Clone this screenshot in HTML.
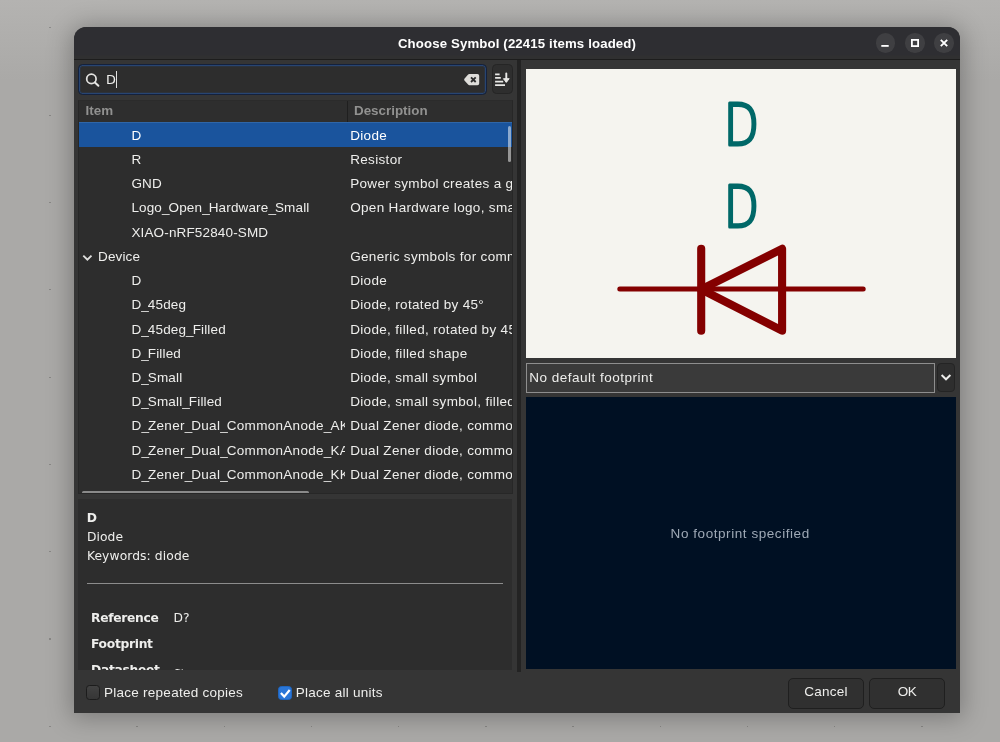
<!DOCTYPE html>
<html lang="en">
<head>
<meta charset="utf-8">
<title>Choose Symbol</title>
<style>
*{box-sizing:border-box;margin:0;padding:0}
html,body{width:1000px;height:742px;overflow:hidden}
body{position:relative;background:#aaa9a7 linear-gradient(#b4b3b1,#aaa9a7 80px) no-repeat;font-family:"Liberation Sans",sans-serif;font-size:14px;color:#eeeeec}
.abs{position:absolute}
.dot{width:1.6px;height:1.2px;background:rgba(0,0,0,.2)}
#shadow{left:74px;top:27px;width:886px;height:686px;border-radius:12px 12px 0 0;box-shadow:0 2px 24px 3px rgba(0,0,0,.27)}
#win{left:74px;top:27px;width:886px;height:686px;border-radius:12px 12px 0 0;background:#353535;overflow:hidden;will-change:transform}
#tb{left:0;top:0;width:886px;height:33px;background:linear-gradient(#2e2e32 28px,#303031 29px);border-bottom:1px solid #1d1d1d}
#title{left:0;top:0;width:886px;height:32px;line-height:32px;text-align:center;font-weight:bold;font-size:13.2px;letter-spacing:.15px;color:#fff;padding-top:.5px}
.wb{width:19.6px;height:19.6px;border-radius:50%;background:#3f3f42;top:6.2px}
.t{white-space:nowrap;line-height:24px;height:24px}
.row .t{top:1.3px;font-size:13.5px}
.c1{letter-spacing:.15px}
.u{letter-spacing:-1px}
.c1.w{letter-spacing:.3px}
.c2{letter-spacing:.33px}

#search{left:4px;top:37px;width:409px;height:30.5px;border:1px solid #14213c;border-radius:4.5px;background:#2d2d2d;box-shadow:inset 0 0 0 1px #284572,inset 0 0 0 2px rgba(40,69,114,.2)}
#sortbtn{left:418px;top:37px;width:20.6px;height:30.4px;border:1px solid #252525;border-radius:4.5px;background:#2e2e2e}
#list{left:4px;top:73px;width:434.8px;height:394px;background:#2d2d2d;border:1px solid #272727;border-top-color:#2b2b2b;overflow:hidden}
#lhead{left:0;top:0;width:434px;height:22px;background:#2e2e2e;border-bottom:1px solid #272727}
.hd{font-weight:bold;color:#919190;font-size:13.4px}
#rows{left:0;top:0;width:434px;height:394px}
.row{left:0;width:434px;height:24.23px}
.row.sel{background:#1a549d;color:#fff;box-shadow:inset 0 1px 0 #2f66a8}
.cell1{left:0;top:0;width:266px;height:24.2px;overflow:hidden}
.cell2{left:269px;top:0;width:164.6px;height:24.2px;overflow:hidden}
#details{left:4px;top:472px;width:434.3px;height:171px;background:#2d2d2d;overflow:hidden}
.d{letter-spacing:.1px;font-family:'DejaVu Sans',sans-serif;font-size:12.3px}
.b{font-weight:bold}
.d.b{letter-spacing:-.3px}
#sash{left:443.2px;top:33px;width:3.8px;height:612px;background:#232323}
#preview{left:452px;top:42px;width:430.3px;height:288.5px;background:#f5f4ef;overflow:hidden}
#combo{left:452px;top:335.5px;width:409.2px;height:30px;background:#3a3a3a;border:1px solid #8e8e8e}
#ddbtn{left:862.6px;top:336px;width:18.8px;height:29.4px;background:#2e2e2e;border:1px solid #242424;border-radius:4px}
#fp{left:452px;top:370.3px;width:430.3px;height:271.7px;background:#001023}
.cb{width:14px;height:14.6px;border-radius:3.5px;background:linear-gradient(#424242,#363636);border:1px solid #1c1c1c}
.cb.on{width:14px;background:#2a76d8;border-color:#1f66c0}
.btn{top:651px;height:30.5px;border:1px solid #1f1f1f;border-radius:5px;background:#303030;text-align:center;line-height:25.6px;white-space:nowrap}
</style>
</head>
<body>
<div id="dots"><i class="abs dot" style="left:49.1px;top:725.7px"></i><i class="abs dot" style="left:49.1px;top:638.4px"></i><i class="abs dot" style="left:49.1px;top:551.1px"></i><i class="abs dot" style="left:49.1px;top:463.8px"></i><i class="abs dot" style="left:49.1px;top:376.5px"></i><i class="abs dot" style="left:49.1px;top:289.2px"></i><i class="abs dot" style="left:49.1px;top:201.9px"></i><i class="abs dot" style="left:49.1px;top:114.6px"></i><i class="abs dot" style="left:49.1px;top:27.3px"></i><i class="abs dot" style="left:136.3px;top:725.7px"></i><i class="abs dot" style="left:223.5px;top:725.7px"></i><i class="abs dot" style="left:310.7px;top:725.7px"></i><i class="abs dot" style="left:397.9px;top:725.7px"></i><i class="abs dot" style="left:485.1px;top:725.7px"></i><i class="abs dot" style="left:572.3px;top:725.7px"></i><i class="abs dot" style="left:659.5px;top:725.7px"></i><i class="abs dot" style="left:746.7px;top:725.7px"></i><i class="abs dot" style="left:833.9px;top:725.7px"></i><i class="abs dot" style="left:921.1px;top:725.7px"></i></div>
<div id="shadow" class="abs"></div>
<div id="win" class="abs">
  <div id="tb" class="abs"></div>
  <div id="title" class="abs"><span id="titletxt">Choose Symbol (22415 items loaded)</span></div>
  <div class="abs wb" style="left:801.6px"><svg class="abs" style="left:-.2px;top:-.2px" width="20" height="20" viewBox="0 0 20 20"><rect x="6.3" y="12" width="7.4" height="1.8" fill="#fff"/></svg></div>
  <div class="abs wb" style="left:831.3px"><svg class="abs" style="left:-.2px;top:-.2px" width="20" height="20" viewBox="0 0 20 20"><rect x="6.9" y="6.9" width="6.2" height="6.2" fill="none" stroke="#fff" stroke-width="1.8"/></svg></div>
  <div class="abs wb" style="left:860.4px"><svg class="abs" style="left:-.2px;top:-.2px" width="20" height="20" viewBox="0 0 20 20"><path d="M6.8 6.8L13.2 13.2M13.2 6.8L6.8 13.2" stroke="#fff" stroke-width="1.9" fill="none"/></svg></div>

  <!-- search -->
  <div id="search" class="abs">
    <svg class="abs" style="left:5px;top:5.5px" width="18" height="18" viewBox="0 0 18 18"><circle cx="7.4" cy="7.9" r="4.7" fill="none" stroke="#e2e2e0" stroke-width="1.75"/><path d="M10.9 11.5L14.4 14.8" stroke="#e6e6e4" stroke-width="2" stroke-linecap="round"/></svg>
    <span class="abs t" id="stext" style="left:27px;top:2.5px;font-family:'DejaVu Sans',sans-serif;font-size:12.9px">D</span>
    <div class="abs" style="left:36.5px;top:6.3px;width:1.2px;height:16.4px;background:#e0e0e0"></div>
    <svg class="abs" style="left:384px;top:8px" width="18" height="13" viewBox="0 0 18 13"><path d="M6.4 1H14.4Q16.2 1 16.2 2.8V10.4Q16.2 12.2 14.4 12.2H6.4Q5.6 12.2 5.1 11.6L1.4 7.4Q0.9 6.6 1.4 5.8L5.1 1.6Q5.6 1 6.4 1Z" fill="#deddda"/><path d="M8 4.3L12.7 9M12.7 4.3L8 9" stroke="#2d2d2d" stroke-width="1.8"/></svg>
  </div>
  <div id="sortbtn" class="abs">
    <svg class="abs" style="left:-1.5px;top:-1px" width="21" height="31" viewBox="0 0 21 31"><path d="M3.1 10.4H7.6M3.1 13.9H8.8M3.1 17.6H11.2M3.1 21.2H13" stroke="#e8e8e6" stroke-width="1.8"/><path d="M14.3 9.4V17.4" stroke="#e8e8e6" stroke-width="1.9" fill="none" stroke-linecap="round"/><path d="M11.4 14.7L14.3 18.3L17.2 14.7Z" fill="#e8e8e6" stroke="#e8e8e6" stroke-width="1" stroke-linejoin="round"/></svg>
  </div>
  <!-- tree list -->
  <div id="list" class="abs">
    <div id="lhead" class="abs">
      <span class="abs t hd" id="h1" style="left:6.5px;top:-2px">Item</span>
      <div class="abs" style="left:268px;top:0;width:1px;height:22px;background:#1f1f1f"></div>
      <span class="abs t hd" id="h2" style="left:275px;top:-2px">Description</span>
    </div>
    <div id="rows" class="abs">
      <div class="abs row sel" style="top:21.40px"><div class="abs cell1"><span class="abs t c1" style="left:52.4px">D</span></div><div class="abs cell2"><span class="abs t c2" style="left:2.2px">Diode</span></div></div>
      <div class="abs row" style="top:45.63px"><div class="abs cell1"><span class="abs t c1" style="left:52.4px">R</span></div><div class="abs cell2"><span class="abs t c2" style="left:2.2px">Resistor</span></div></div>
      <div class="abs row" style="top:69.86px"><div class="abs cell1"><span class="abs t c1" style="left:52.4px">GND</span></div><div class="abs cell2"><span class="abs t c2" style="left:2.2px">Power symbol creates a global label with name &quot;GND&quot; , ground</span></div></div>
      <div class="abs row" style="top:94.09px"><div class="abs cell1"><span class="abs t c1" style="left:52.4px">Logo<span class="u">_</span>Open<span class="u">_</span>Hardware<span class="u">_</span>Small</span></div><div class="abs cell2"><span class="abs t c2" style="left:2.2px">Open Hardware logo, small</span></div></div>
      <div class="abs row" style="top:118.32px"><div class="abs cell1"><span class="abs t c1" style="left:52.4px">XIAO-nRF52840-SMD</span></div><div class="abs cell2"><span class="abs t c2" style="left:2.2px"></span></div></div>
      <div class="abs row" style="top:142.55px"><div class="abs cell1"><svg class="abs" style="left:3.4px;top:8px" width="11" height="10" viewBox="0 0 11 10"><path d="M1.3 3.6L5.4 7.6L9.5 3.6" fill="none" stroke="#dededc" stroke-width="1.9"/></svg><span class="abs t c1" style="left:19px">Device</span></div><div class="abs cell2"><span class="abs t c2" style="left:2.2px">Generic symbols for common components</span></div></div>
      <div class="abs row" style="top:166.78px"><div class="abs cell1"><span class="abs t c1" style="left:52.4px">D</span></div><div class="abs cell2"><span class="abs t c2" style="left:2.2px">Diode</span></div></div>
      <div class="abs row" style="top:191.01px"><div class="abs cell1"><span class="abs t c1" style="left:52.4px">D<span class="u">_</span>45deg</span></div><div class="abs cell2"><span class="abs t c2" style="left:2.2px">Diode, rotated by 45°</span></div></div>
      <div class="abs row" style="top:215.24px"><div class="abs cell1"><span class="abs t c1" style="left:52.4px">D<span class="u">_</span>45deg<span class="u">_</span>Filled</span></div><div class="abs cell2"><span class="abs t c2" style="left:2.2px">Diode, filled, rotated by 45°</span></div></div>
      <div class="abs row" style="top:239.47px"><div class="abs cell1"><span class="abs t c1" style="left:52.4px">D<span class="u">_</span>Filled</span></div><div class="abs cell2"><span class="abs t c2" style="left:2.2px">Diode, filled shape</span></div></div>
      <div class="abs row" style="top:263.70px"><div class="abs cell1"><span class="abs t c1" style="left:52.4px">D<span class="u">_</span>Small</span></div><div class="abs cell2"><span class="abs t c2" style="left:2.2px">Diode, small symbol</span></div></div>
      <div class="abs row" style="top:287.93px"><div class="abs cell1"><span class="abs t c1" style="left:52.4px">D<span class="u">_</span>Small<span class="u">_</span>Filled</span></div><div class="abs cell2"><span class="abs t c2" style="left:2.2px">Diode, small symbol, filled shape</span></div></div>
      <div class="abs row" style="top:312.16px"><div class="abs cell1"><span class="abs t c1 w" style="left:52.4px">D<span class="u">_</span>Zener<span class="u">_</span>Dual<span class="u">_</span>CommonAnode<span class="u">_</span>AKA</span></div><div class="abs cell2"><span class="abs t c2" style="left:2.2px">Dual Zener diode, common anode</span></div></div>
      <div class="abs row" style="top:336.39px"><div class="abs cell1"><span class="abs t c1 w" style="left:52.4px">D<span class="u">_</span>Zener<span class="u">_</span>Dual<span class="u">_</span>CommonAnode<span class="u">_</span>KAK</span></div><div class="abs cell2"><span class="abs t c2" style="left:2.2px">Dual Zener diode, common anode</span></div></div>
      <div class="abs row" style="top:360.62px"><div class="abs cell1"><span class="abs t c1 w" style="left:52.4px">D<span class="u">_</span>Zener<span class="u">_</span>Dual<span class="u">_</span>CommonAnode<span class="u">_</span>KKA</span></div><div class="abs cell2"><span class="abs t c2" style="left:2.2px">Dual Zener diode, common anode</span></div></div>
    </div>
    <div class="abs" style="left:429.2px;top:25px;width:2.6px;height:35.5px;border-radius:2px;background:rgba(255,255,255,.5)"></div>
    <div class="abs" style="left:3px;top:390px;width:227px;height:3px;border-radius:2px;background:#8a8a8a"></div>
  </div>
  <!-- details html panel -->
  <div id="details" class="abs">
    <span class="abs t d b" id="d1" style="left:8.8px;top:7.3px">D</span>
    <span class="abs t d" id="d2" style="left:8.9px;top:26px">Diode</span>
    <span class="abs t d" id="d3" style="left:8.9px;top:44.8px">Keywords: diode</span>
    <div class="abs" style="left:9px;top:84px;width:416px;height:1px;background:#8c8c8c"></div>
    <span class="abs t d b" id="d4" style="left:13px;top:106.7px">Reference</span>
    <span class="abs t d" id="d5" style="left:95.5px;top:106.7px">D?</span>
    <span class="abs t d b" id="d6" style="left:13px;top:132.8px">Footprint</span>
    <span class="abs t d b" id="d7" style="left:13px;top:158.8px">Datasheet</span>
    <span class="abs t d" id="d8" style="left:95.8px;top:158.8px">~</span>
  </div>
  <div id="sash" class="abs"></div>
  <!-- symbol preview -->
  <div id="preview" class="abs">
    <svg class="abs" style="left:0;top:0" width="431" height="289" viewBox="526 69 431 289">
      <g fill="#006868" stroke="#006868" stroke-width="3.2" stroke-linejoin="round" font-family="'DejaVu Sans', sans-serif" font-weight="200" font-size="56.2">
        <text transform="translate(724 145.3) scale(.806 1)">D</text>
        <text transform="translate(724 227.4) scale(.806 1)">D</text>
      </g>
      <g stroke="#840000" fill="none" stroke-linecap="round" stroke-linejoin="round">
        <path d="M619.8 289H863.2" stroke-width="5"/>
        <path d="M701.2 248.8V330.7" stroke-width="8.1"/>
        <path d="M782.1 248.8V330.7L701.2 289.4Z" stroke-width="8.1"/>
      </g>
    </svg>
  </div>
  <div id="combo" class="abs"><span class="abs t" id="cbt" style="left:2.2px;top:2px;font-size:13.5px;letter-spacing:.5px">No default footprint</span></div>
  <div id="ddbtn" class="abs"><svg class="abs" style="left:-.4px;top:-.6px" width="18" height="29" viewBox="0 0 18 29"><path d="M4.6 12L9 16.3L13.4 12" fill="none" stroke="#eeeeec" stroke-width="1.9"/></svg></div>
  <div id="fp" class="abs"><span class="abs t" id="nofp" style="left:144.6px;top:125px;color:#9ea9b6;font-size:13.5px;letter-spacing:.56px">No footprint specified</span></div>
  <!-- bottom bar -->
  <div class="abs cb" style="left:12px;top:658px"></div>
  <span class="abs t" id="l1" style="left:30px;top:654.45px;font-size:13.5px;letter-spacing:.26px">Place repeated copies</span>
  <div class="abs cb on" style="left:204px;top:658.5px"><svg class="abs" style="left:0;top:0" width="14" height="14.5" viewBox="0 0 14 14.5"><path d="M1.9 6.1L5.2 9.6L10.7 3" fill="none" stroke="#fff" stroke-width="2.2"/></svg></div>
  <span class="abs t" id="l2" style="left:221.7px;top:654.45px;font-size:13.5px;letter-spacing:.25px">Place all units</span>
  <div class="abs btn" style="left:714.3px;width:75.4px"><span id="bc" style="font-size:13.5px;letter-spacing:.28px">Cancel</span></div>
  <div class="abs btn" style="left:795.2px;width:75.6px"><span id="bo" style="font-size:13.5px;letter-spacing:-.4px">OK</span></div>
</div>
</body>
</html>
